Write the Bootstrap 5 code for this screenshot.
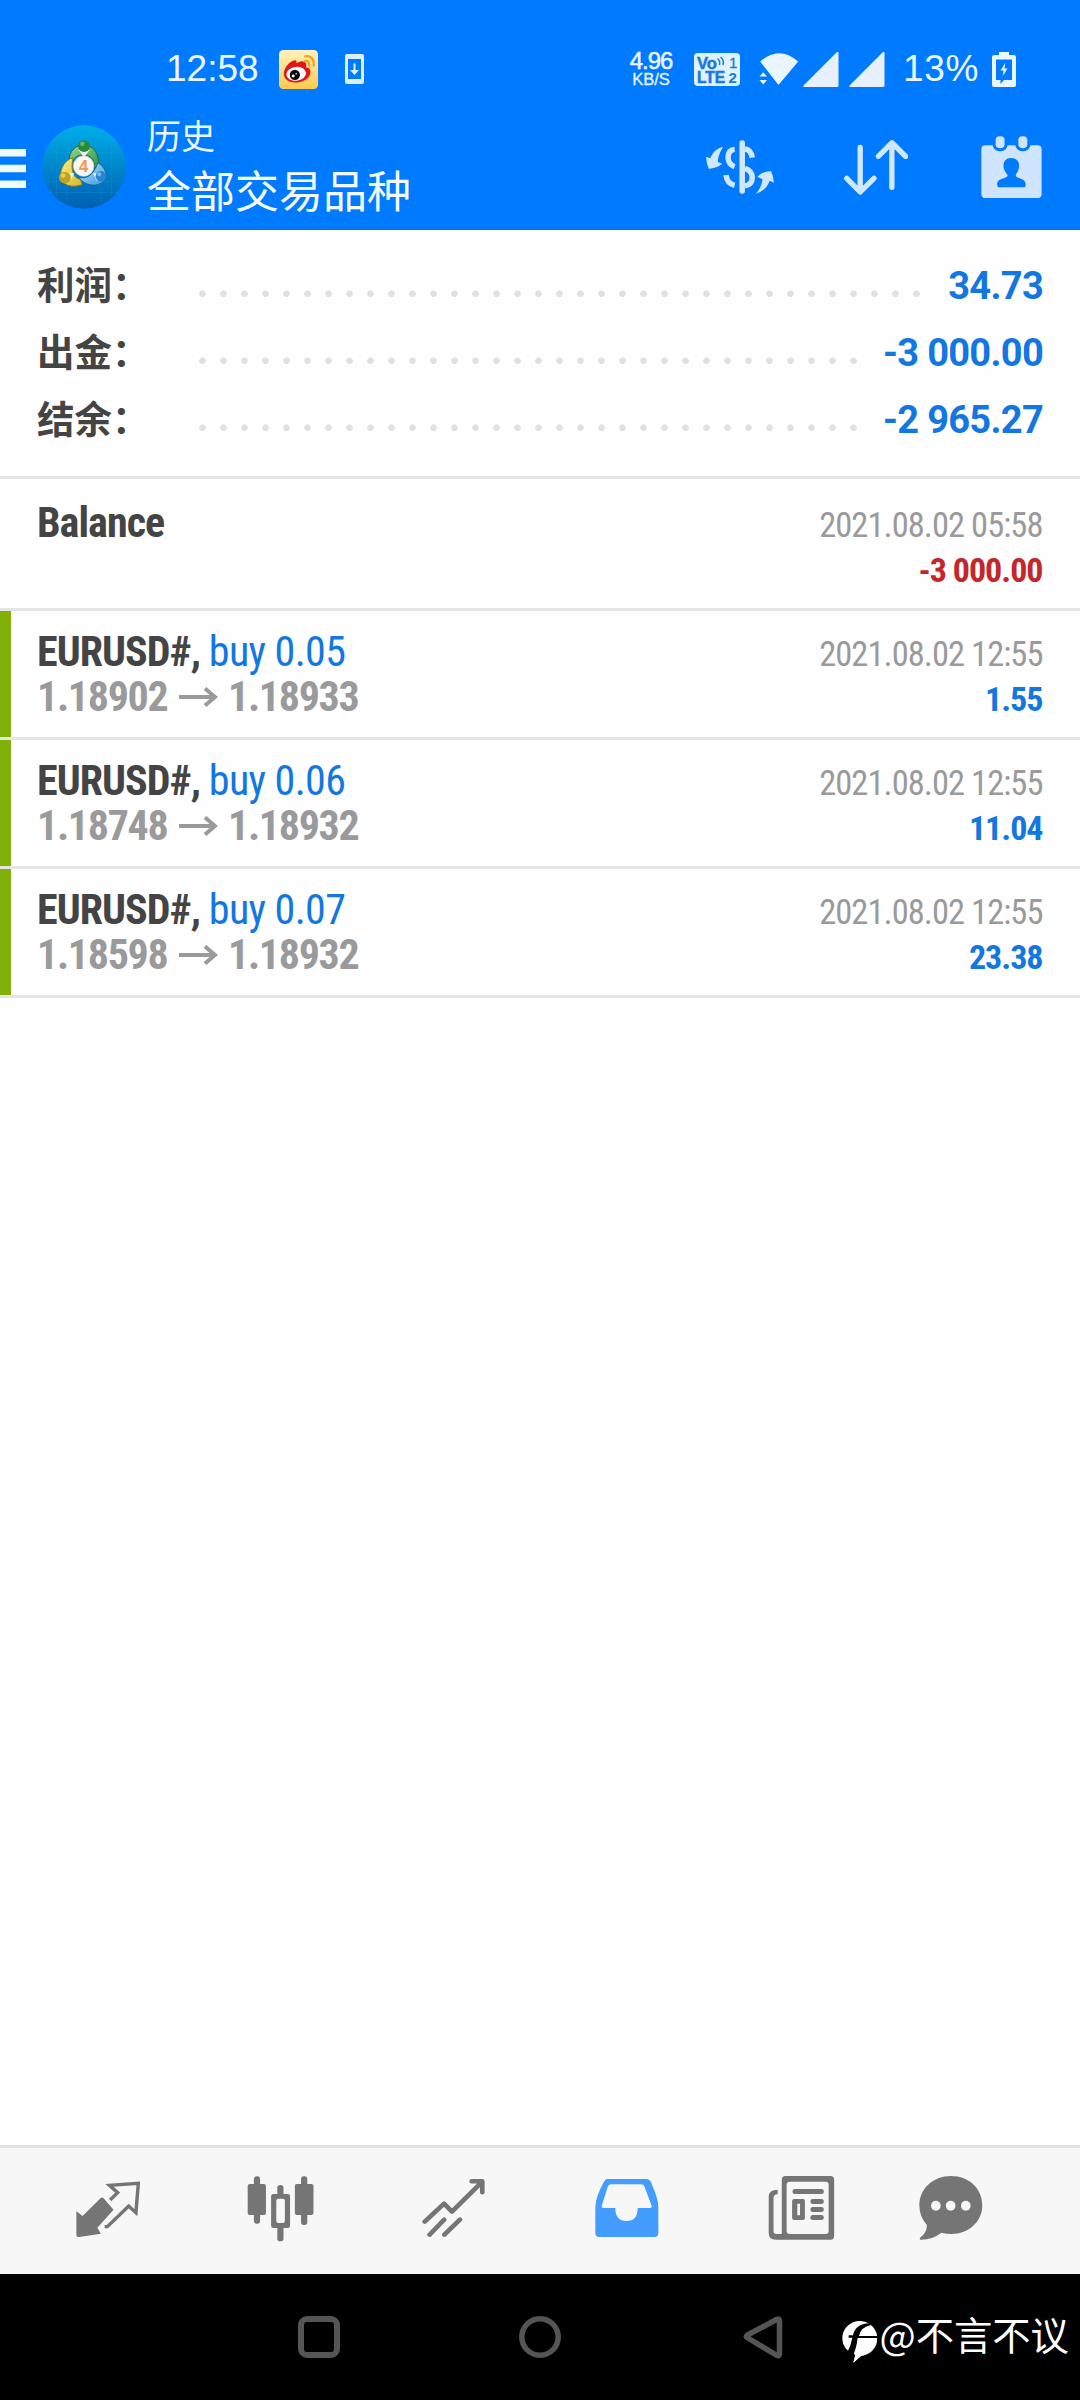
<!DOCTYPE html>
<html lang="zh-CN">
<head>
<meta charset="utf-8">
<meta name="viewport" content="width=device-width, initial-scale=1">
<title>历史</title>
<link href="https://cdn.jsdelivr.net/npm/bootstrap@5.3.0/dist/css/bootstrap.min.css" rel="stylesheet">
<style>
  body { font-family: Roboto, "Noto Sans CJK SC", sans-serif; background: #fefefe; }
  svg { display: block; flex: none; }
  .phone { width: 1080px; height: 2400px; overflow: hidden; }
  .app-head { height: 230px; background: #007aff; color: #e9f6ff; border-bottom: 1px solid #0a6fe0; }
  .status-row { height: 104px; padding-top: 34px; font-family: "Liberation Sans", sans-serif; }
  .status-row > * { flex: none; }
  .clock { margin-left: 166px; width: 113px; font-size: 37px; line-height: 62px; }
  .speed { margin: -2px 0 0 265px; width: 44px; text-align: center; white-space: nowrap; }
  .speed-num { font-size: 24px; line-height: 21px; letter-spacing: -1px; -webkit-text-stroke: .5px #e9f6ff; }
  .speed-unit { font-size: 16.5px; line-height: 16px; -webkit-text-stroke: .3px #e9f6ff; }
  .charge { margin-left: 18px; width: 89px; font-size: 37px; line-height: 62px; letter-spacing: .7px; }
  .title-row { height: 126px; }
  .titles { width: 557px; margin-left: 21px; margin-top: -2px; font-family: "Noto Sans CJK SC", sans-serif; font-weight: 400; }
  .title-small { font-size: 34px; line-height: 46px; }
  .title-big { font-size: 44px; line-height: 62px; color: #f3fbff; }
  .totals { padding: 22.5px 37px 22.5px 37px; border-bottom: 3px solid #e5e5e5; }
  .total-line { height: 67px; }
  .total-label { width: 155px; font: 700 37.5px/60px "Noto Sans CJK SC", sans-serif; color: #444; }
  .leader { height: 67px; margin-right: 18px; background: radial-gradient(circle at 10.5px 40.7px, #e1e1e1 2.9px, transparent 3.7px) 0 0 / 21px 67px repeat-x; }
  .total-value { font-size: 38px; font-weight: 700; line-height: 67px; letter-spacing: -.7px; color: #1277e0; }
  .deal { height: 129px; border-bottom: 3px solid #e5e5e5; }
  .deal-first { height: 132px; }
  .deal-first .deal-body { padding-top: 21px; }
  .side-mark { width: 10.5px; background: #80b009; }
  .deal-body { padding: 18px 37.5px 0 26.5px; font-family: "Roboto Condensed", Roboto, sans-serif; font-stretch: 75%; }
  .deal-line { height: 45px; line-height: 45px; white-space: nowrap; }
  .deal-name { font-size: 42px; font-weight: 700; letter-spacing: -.95px; color: #444; }
  .deal-side { font-weight: 400; letter-spacing: -.6px; color: #1277e0; }
  .deal-price { font-size: 42px; font-weight: 700; letter-spacing: -1.3px; color: #9a9a9c; }
  .price-arrow { margin: 0 9.5px 0 12px; }
  .deal-time { font-size: 34.5px; font-weight: 400; letter-spacing: -.95px; color: #9a9a9a; }
  .deal-sum { font-size: 34px; font-weight: 700; letter-spacing: -1px; color: #1277e0; }
  .deal-loss { color: #c4262a; line-height: 50px; }
  .tab-row { height: 129px; background: #f7f7f7; border-top: 3px solid #e3e3e3; padding-bottom: 5px; color: #757575; }
  .sys-row { height: 126px; background: #000; color: #555; }
  .user-mark { margin: -6px 0 0 2.5px; font: 400 38.3px/56px "Noto Sans CJK SC", sans-serif; color: #fff; white-space: nowrap; }
</style>
</head>
<body>
<div class="phone d-flex flex-column">
  <header class="app-head flex-shrink-0">
    <div class="status-row d-flex align-items-center">
      <span class="clock">12:58</span>
      <svg width="39" height="39" viewBox="27 26 118 118">
        <defs><linearGradient id="wb" x2="0" y2="1"><stop offset="0" stop-color="#fff3bd"/><stop offset="1" stop-color="#ffca4c"/></linearGradient></defs>
        <rect x="27" y="26" width="118" height="118" rx="13" fill="url(#wb)"/>
        <path d="M42 99C40 82 60 58 75 57Q82 57 80 66Q98 55 108 65Q112 70 108 78Q125 79 122 96C118 116 95 124 76 124C56 124 43 114 42 99Z" fill="#e1151c"/>
        <ellipse cx="79" cy="98" rx="30" ry="21" fill="#fff" transform="rotate(-6 79 98)"/>
        <circle cx="75" cy="101" r="15.500" fill="#0b0b0b"/><circle cx="70" cy="105" r="4.500" fill="#fff"/><circle cx="79" cy="98" r="2.500" fill="#fff"/>
        <path d="M106 45Q134 42 132 73M106 59Q119 58 118 73" fill="none" stroke="#f5a31f" stroke-width="7" stroke-linecap="round"/>
      </svg>
      <svg width="19" height="30" viewBox="0 0 19 30" style="margin-left:27px">
        <path fill="#dcefff" fill-rule="evenodd" d="M2 0H17Q19 0 19 2V28Q19 30 17 30H2Q0 30 0 28V2Q0 0 2 0ZM3 5V25H16V5Z"/>
        <path fill="#dcefff" d="M8.500 9.500h2v6.500h3.500l-4.500 5-4.500-5h3.500z"/>
      </svg>
      <div class="speed"><div class="speed-num">4.96</div><div class="speed-unit">KB/S</div></div>
      <svg width="46" height="33" viewBox="0 0 46 33" style="margin-left:21px">
        <rect width="46" height="33" rx="4" fill="#dff2ff"/>
        <g fill="#1878e0" font-family="Liberation Sans" font-weight="700">
          <text x="3" y="15.500" font-size="16.500" textLength="20" lengthAdjust="spacingAndGlyphs" stroke="#1878e0" stroke-width=".5">Vo</text>
          <text x="3" y="30" font-size="16.500" textLength="28" lengthAdjust="spacingAndGlyphs" stroke="#1878e0" stroke-width=".6">LTE</text>
          <text x="35" y="15" font-size="15" font-weight="400" stroke="#1878e0" stroke-width=".3">1</text>
          <text x="34.500" y="30" font-size="15" stroke="none">2</text>
        </g>
        <path d="M23.500 5.500Q26.500 8 25.500 12M26.500 4Q30.500 7 29 12" fill="none" stroke="#1878e0" stroke-width="1.500"/>
      </svg>
      <svg width="40" height="32" viewBox="0 0 40 32" style="margin-left:19px" fill="#e9f6ff">
        <path d="M1.200 8.500Q20-8 39.200 8.500L20.300 31Q19.500 32 18.700 31Z"/>
        <path d="M.5 23.500L4.200 19.300 8 23.500ZM.5 27L4.200 31.500 8 27Z"/>
      </svg>
      <svg width="36" height="35" viewBox="0 0 36 35" style="margin-left:4px" fill="#e6f0ff"><path d="M33.500.5Q35.500-1 35.500 1V33.500Q35.500 35 34 35H1.500Q-.5 35 .8 33.300Z"/></svg>
      <svg width="36" height="35" viewBox="0 0 36 35" style="margin-left:10px" fill="#e6f0ff"><path d="M33.500.5Q35.500-1 35.500 1V33.500Q35.500 35 34 35H1.500Q-.5 35 .8 33.300Z"/></svg>
      <span class="charge">13%</span>
      <svg width="24" height="35" viewBox="0 0 24 35">
        <path fill="#e9f6ff" fill-rule="evenodd" d="M7 0H17V3H22Q24 3 24 5V33Q24 35 22 35H2Q0 35 0 33V5Q0 3 2 3H7ZM4 7.500V28H8.500V32L12 28H20V7.500Z"/>
        <path fill="#e9f6ff" d="M13.300 11L8.500 18.500h3L10.800 24 15.500 16.500h-3z"/>
      </svg>
    </div>
    <div class="title-row d-flex align-items-center">
      <svg width="26" height="39" viewBox="0 0 26 39" style="margin-top:2px" fill="#f0fbff"><path d="M0 0H26V7.500H0ZM0 15.800H26V23.300H0ZM0 31.600H26V39.100H0Z"/></svg>
      <svg width="84" height="84" viewBox="36 44 254 254" style="margin-left:16px">
        <defs>
          <linearGradient id="lg" x2="0" y2="1"><stop offset="0" stop-color="#00aee8"/><stop offset=".55" stop-color="#0082c8"/><stop offset="1" stop-color="#005fb4"/></linearGradient>
          <linearGradient id="gg" x2="1" y2="1"><stop offset="0" stop-color="#9ad896"/><stop offset="1" stop-color="#2a9440"/></linearGradient>
          <linearGradient id="gy" x2="1" y2="1"><stop offset="0" stop-color="#f9ee88"/><stop offset="1" stop-color="#d6b52a"/></linearGradient>
          <linearGradient id="gb" x2="1" y2="1"><stop offset="0" stop-color="#b9e4fb"/><stop offset="1" stop-color="#3a97dc"/></linearGradient>
        </defs>
        <circle cx="163" cy="171" r="126" fill="url(#lg)"/>
        <path d="M80 80V260M112 60V285M215 60V285M246 80V260M60 95H266M60 127H266M60 215H266M60 248H266" stroke="#24a2dc" stroke-width="1.500" opacity=".45"/>
        <g stroke-width="3">
          <path d="M118 158C116 122 138 104 163 104C190 105 208 130 207 160L196 178C196 150 182 134 162 134C146 134 134 142 130 152Z" fill="url(#gg)" stroke="#1d6c45"/>
          <path d="M130 143C108 148 90 172 92 206C100 226 128 236 158 224L152 208C130 205 122 180 130 143Z" fill="url(#gy)" stroke="#8a7a20"/>
          <path d="M205 158C228 172 236 198 226 210C206 234 168 230 146 202C170 208 190 198 205 158Z" fill="url(#gb)" stroke="#1565a5"/>
        </g>
        <path d="M145 118L163 142 181 118ZM104 188L134 190 122 212ZM221 188L190 190 202 214Z" fill="#e6f5ef"/>
        <circle cx="163" cy="108" r="18" fill="#298b37"/><circle cx="158" cy="101" r="7" fill="#7bc58a" opacity=".75"/>
        <circle cx="105" cy="203" r="18" fill="#bda321"/><circle cx="100" cy="197" r="7" fill="#f0dc74" opacity=".75"/>
        <circle cx="214" cy="199" r="16" fill="#2987d2"/><circle cx="209" cy="193" r="6" fill="#8fcdf5" opacity=".75"/>
        <circle cx="162" cy="168" r="31" fill="#fbf6f2" stroke="#d8d4c8" stroke-width="2"/>
        <text x="162" y="186" text-anchor="middle" font-family="Liberation Sans" font-weight="700" font-size="50" fill="#ee9a55">4</text>
      </svg>
      <div class="titles"><div class="title-small">历史</div><div class="title-big">全部交易品种</div></div>
      <svg width="69.600" height="54" viewBox="480 325 202 162" preserveAspectRatio="none" fill="#cfe8ff" style="margin-left:.5px">
        <rect x="580" y="326" width="16" height="160" rx="8"/>
        <path fill="none" stroke="#cfe8ff" stroke-width="16" d="M566 353Q547 355 547 377Q547 398 566 405M596 352Q614 354 617 378M596 410Q617 418 617 438Q617 458 596 463M541 430Q544 456 566 461"/>
        <path d="M483 375L495 380Q506 351 533 345Q518 367 517 391L530 396Q514 410 491 411Q484 396 483 375ZM680 453L668 447Q656 478 628 486Q644 468 647 443L632 435Q648 418 672 419Q678 432 680 453Z"/>
      </svg>
      <svg width="64.400" height="56.700" viewBox="883 325 187 170" preserveAspectRatio="none" style="margin-left:69.500px" fill="none" stroke="#cfe8ff" stroke-width="15.500" stroke-linecap="round" stroke-linejoin="round">
        <path d="M930 350V482M891 443L930 484 970 443M1022 470V338M983 377L1022 336 1062 377"/>
      </svg>
      <svg width="61.300" height="62.700" viewBox="1282 314 178 188" preserveAspectRatio="none" style="margin-left:73px">
        <rect x="1283" y="342" width="175" height="158" rx="12" fill="#cfe4ff"/>
        <g fill="#cfe4ff" stroke="#007aff" stroke-width="9"><rect x="1320" y="310" width="35" height="45" rx="16"/><rect x="1386" y="310" width="35" height="45" rx="16"/></g>
        <path fill="#007aff" d="M1370 380C1388 380 1395 394 1392 410C1390 421 1384 427 1383 432C1383 444 1412 438 1412 460Q1412 468 1406 468H1335Q1329 468 1329 460C1329 438 1359 444 1359 432C1358 427 1350 421 1348 410C1345 394 1352 380 1370 380Z"/>
      </svg>
    </div>
  </header>

  <main class="flex-fill">
    <section class="totals">
      <div class="total-line d-flex align-items-start"><span class="total-label flex-shrink-0">利润：</span><span class="leader flex-fill"></span><span class="total-value">34.73</span></div>
      <div class="total-line d-flex align-items-start"><span class="total-label flex-shrink-0">出金：</span><span class="leader flex-fill"></span><span class="total-value">-3 000.00</span></div>
      <div class="total-line d-flex align-items-start"><span class="total-label flex-shrink-0">结余：</span><span class="leader flex-fill"></span><span class="total-value">-2 965.27</span></div>
    </section>
    <ul class="list-unstyled mb-0">
      <li class="deal deal-first d-flex">
        <div class="side-mark bg-transparent"></div>
        <div class="deal-body flex-fill">
          <div class="deal-line d-flex justify-content-between align-items-baseline"><span class="deal-name">Balance</span><span class="deal-time">2021.08.02 05:58</span></div>
          <div class="deal-line d-flex justify-content-end"><span class="deal-sum deal-loss">-3 000.00</span></div>
        </div>
      </li>
      <li class="deal d-flex">
        <div class="side-mark"></div>
        <div class="deal-body flex-fill">
          <div class="deal-line d-flex justify-content-between align-items-baseline"><span class="deal-name">EURUSD#, <span class="deal-side">buy 0.05</span></span><span class="deal-time">2021.08.02 12:55</span></div>
          <div class="deal-line d-flex justify-content-between align-items-baseline"><span class="deal-price d-flex align-items-center">1.18902<svg width="39" height="20" viewBox="0 0 39 20" class="price-arrow" fill="none" stroke="#9a9a9c" stroke-width="4"><path d="M0 10H36M26 1.500L36 10 26 18.500"/></svg>1.18933</span><span class="deal-sum">1.55</span></div>
        </div>
      </li>
      <li class="deal d-flex">
        <div class="side-mark"></div>
        <div class="deal-body flex-fill">
          <div class="deal-line d-flex justify-content-between align-items-baseline"><span class="deal-name">EURUSD#, <span class="deal-side">buy 0.06</span></span><span class="deal-time">2021.08.02 12:55</span></div>
          <div class="deal-line d-flex justify-content-between align-items-baseline"><span class="deal-price d-flex align-items-center">1.18748<svg width="39" height="20" viewBox="0 0 39 20" class="price-arrow" fill="none" stroke="#9a9a9c" stroke-width="4"><path d="M0 10H36M26 1.500L36 10 26 18.500"/></svg>1.18932</span><span class="deal-sum">11.04</span></div>
        </div>
      </li>
      <li class="deal d-flex">
        <div class="side-mark"></div>
        <div class="deal-body flex-fill">
          <div class="deal-line d-flex justify-content-between align-items-baseline"><span class="deal-name">EURUSD#, <span class="deal-side">buy 0.07</span></span><span class="deal-time">2021.08.02 12:55</span></div>
          <div class="deal-line d-flex justify-content-between align-items-baseline"><span class="deal-price d-flex align-items-center">1.18598<svg width="39" height="20" viewBox="0 0 39 20" class="price-arrow" fill="none" stroke="#9a9a9c" stroke-width="4"><path d="M0 10H36M26 1.500L36 10 26 18.500"/></svg>1.18932</span><span class="deal-sum">23.38</span></div>
        </div>
      </li>
    </ul>
  </main>

  <nav class="tab-row d-flex align-items-center flex-shrink-0">
    <svg width="65.400" height="66.700" viewBox="217 135 190 200" preserveAspectRatio="none" style="margin-left:74.700px" fill="currentColor">
      <path d="M221 244L239 258 292 204Q296 201 300 205L329 239 282 293 292 311 229 321Q221 321 221 314Z"/>
      <path d="M303 290H311L373 228 394 248 401 160 317 166 341 188 319 210" fill="none" stroke="currentColor" stroke-width="10"/>
    </svg>
    <svg width="67.500" height="66.700" viewBox="716 135 196 200" preserveAspectRatio="none" style="margin-left:106.500px" fill="currentColor">
      <rect x="718" y="162" width="53" height="93" rx="6"/><rect x="736" y="139" width="18" height="142" rx="8"/>
      <rect x="855" y="162" width="54" height="93" rx="6"/><rect x="873" y="139" width="18" height="146" rx="8"/>
      <path fill-rule="evenodd" d="M804 192V173Q804 165 813 165T822 173V192H834Q841 192 841 199V287Q841 294 834 294H822V326Q822 334 813 334T804 326V294H793Q786 294 786 287V199Q786 192 793 192ZM807 206Q801 206 801 212V273Q801 279 807 279H820Q826 279 826 273V212Q826 206 820 206Z"/>
    </svg>
    <svg width="63.400" height="66.700" viewBox="1224 135 184 200" preserveAspectRatio="none" style="margin-left:107.500px" fill="none" stroke="currentColor" stroke-width="13.500" stroke-linecap="round" stroke-linejoin="round">
      <path d="M1232 275L1288 221 1311 245 1396 158M1368 154H1399V187M1246 314L1288 269M1289 314L1334 269"/>
    </svg>
    <svg width="64" height="66.700" viewBox="161 135 186 200" preserveAspectRatio="none" style="margin-left:110.400px" fill="#429dff">
      <path fill-rule="evenodd" d="M196 147H312Q319 147 323 155Q345 205 345 230V310Q345 321 334 321H173Q162 321 162 310V230Q163 200 187 155Q191 147 196 147ZM208 163Q201 163 198 170L181 226Q179 234 187 234H220Q220 273 253 273Q285 273 285 234H320Q328 234 325 226L305 170Q302 163 295 163Z"/>
    </svg>
    <svg width="66.500" height="66.700" viewBox="663 135 193 200" preserveAspectRatio="none" style="margin-left:109px" fill="currentColor">
      <path fill-rule="evenodd" d="M714 138H844Q855 138 855 149V318Q855 329 844 329H685Q665 329 665 309V200Q665 179 691 179V193Q679 194 679 203V303Q679 312 688 312H703V149Q703 138 714 138ZM726 155Q717 155 717 164V303Q717 312 726 312H831Q839 312 839 303V164Q839 155 831 155Z"/>
      <rect x="734" y="177" width="91" height="15" rx="7"/><path fill-rule="evenodd" d="M739 207H765Q770 207 770 213V264Q770 270 765 270H739Q733 270 733 264V213Q733 207 739 207ZM748 221V256H756V221Z"/>
      <rect x="786" y="207" width="39" height="15" rx="7"/><rect x="786" y="231" width="39" height="15" rx="7"/><rect x="786" y="255" width="39" height="15" rx="7"/>
    </svg>
    <svg width="64" height="66.700" viewBox="1101 135 186 200" preserveAspectRatio="none" style="margin-left:84.300px" fill="currentColor">
      <path d="M1194 138C1247 138 1285 176 1285 226S1245 312 1195 312Q1180 312 1166 308Q1140 329 1108 329Q1101 329 1104 323Q1124 309 1124 285Q1102 260 1102 226C1102 176 1142 138 1194 138Z"/>
      <g fill="#f7f7f7"><ellipse cx="1150" cy="227" rx="14" ry="15"/><ellipse cx="1193" cy="227" rx="14" ry="15"/><ellipse cx="1237" cy="227" rx="14" ry="15"/></g>
    </svg>
  </nav>

  <footer class="sys-row d-flex align-items-center flex-shrink-0">
    <svg width="42" height="42" viewBox="0 0 42 42" style="margin-left:298px" fill="none" stroke="currentColor" stroke-width="6"><rect x="3" y="3" width="36" height="36" rx="6"/></svg>
    <svg width="42" height="42" viewBox="0 0 42 42" style="margin-left:179px" fill="none" stroke="currentColor" stroke-width="5.500"><circle cx="21" cy="21" r="18.200"/></svg>
    <svg width="40" height="43" viewBox="0 0 40 43" style="margin-left:182px" fill="none" stroke="currentColor" stroke-width="5.500" stroke-linejoin="round"><path d="M4 21.500Q2.500 20.500 4.500 19L34 3.300Q36.500 2.500 36.500 5V38Q36.500 40.500 34 39.500Z"/></svg>
    <svg width="35.500" height="42" viewBox="35 65 106.500 126" style="margin-left:58.500px;margin-top:10px">
      <path fill="#fff" d="M88 65C117 65 141 88 141 117C141 147 118 168 92 170L69 190 75 166C50 158 36 140 36 117C36 88 60 65 88 65Z"/>
      <path d="M116 72Q75 74 68 108H55V115H66Q62 140 50 160L64 178Q78 150 82 116H141V110H86Q91 83 122 77Z" fill="#000"/>
      <path fill="#fff" d="M69 190L77 160 94 168Z"/>
    </svg>
    <span class="user-mark">@不言不议</span>
  </footer>
</div>
<script src="https://cdn.jsdelivr.net/npm/bootstrap@5.3.0/dist/js/bootstrap.bundle.min.js"></script>
</body>
</html>
